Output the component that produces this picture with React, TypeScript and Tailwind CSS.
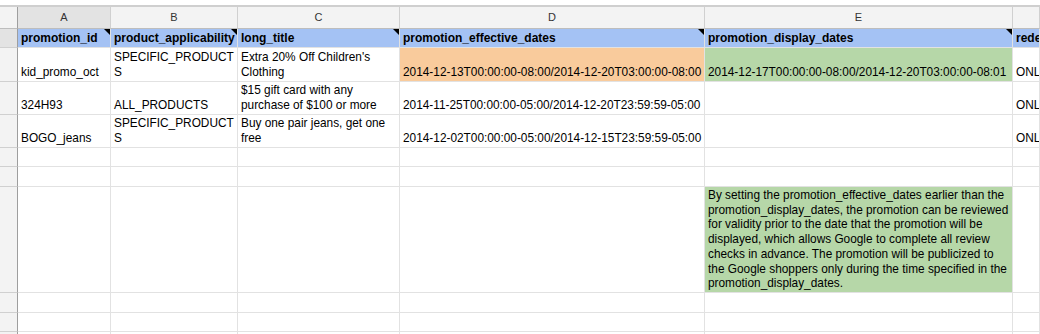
import React from "react";

type CellProps = {
  lines?: string[];
  bg?: string;
  bold?: boolean;
  note?: boolean;
  tight?: boolean;
};

const Cell = ({ lines = [], bg = "bg-white", bold, note, tight }: CellProps) => (
  <div
    className={`relative flex flex-col justify-end overflow-hidden whitespace-nowrap border-b border-r border-[#e2e2e2] px-[3px] pb-[1px] text-black ${
      tight ? "leading-[14.7px]" : "leading-[15px]"
    } ${bg} ${bold ? "text-[12px] font-bold" : "text-[11.85px]"}`}
  >
    {lines.map((l, i) => (
      <span key={i}>{l}</span>
    ))}
    {note && (
      <span className="absolute right-0 top-0 h-0 w-0 border-l-[6px] border-t-[6px] border-l-transparent border-t-black" />
    )}
  </div>
);

const RowHead = ({ dark }: { dark?: boolean }) => (
  <div
    className={`border-b border-r border-b-[#d0d0d0] border-r-[#9e9e9e] ${
      dark ? "bg-[#e3e3e3]" : "bg-[#f3f3f3]"
    }`}
  />
);

const letters = ["A", "B", "C", "D", "E", ""];

const blue = "bg-[#a4c2f4]";
const orange = "bg-[#f9cb9c]";
const green = "bg-[#b6d7a8]";

const rows: CellProps[][] = [
  [
    { lines: ["promotion_id"], bg: blue, bold: true, note: true },
    { lines: ["product_applicability"], bg: blue, bold: true, note: true },
    { lines: ["long_title"], bg: blue, bold: true, note: true },
    { lines: ["promotion_effective_dates"], bg: blue, bold: true, note: true },
    { lines: ["promotion_display_dates"], bg: blue, bold: true, note: true },
    { lines: ["redemption_channel"], bg: blue, bold: true },
  ],
  [
    { lines: ["kid_promo_oct"] },
    { lines: ["SPECIFIC_PRODUCT", "S"] },
    { lines: ["Extra 20% Off Children's", "Clothing"] },
    { lines: ["2014-12-13T00:00:00-08:00/2014-12-20T03:00:00-08:00"], bg: orange },
    { lines: ["2014-12-17T00:00:00-08:00/2014-12-20T03:00:00-08:01"], bg: green },
    { lines: ["ONLINE"] },
  ],
  [
    { lines: ["324H93"] },
    { lines: ["ALL_PRODUCTS"] },
    { lines: ["$15 gift card with any", "purchase of $100 or more"] },
    { lines: ["2014-11-25T00:00:00-05:00/2014-12-20T23:59:59-05:00"] },
    {},
    { lines: ["ONLINE"] },
  ],
  [
    { lines: ["BOGO_jeans"] },
    { lines: ["SPECIFIC_PRODUCT", "S"] },
    { lines: ["Buy one pair jeans, get one", "free"] },
    { lines: ["2014-12-02T00:00:00-05:00/2014-12-15T23:59:59-05:00"] },
    {},
    { lines: ["ONLINE"] },
  ],
  [{}, {}, {}, {}, {}, {}],
  [{}, {}, {}, {}, {}, {}],
  [
    {},
    {},
    {},
    {},
    {
      lines: [
        "By setting the promotion_effective_dates earlier than the",
        "promotion_display_dates, the promotion can be reviewed",
        "for validity prior to the date that the promotion will be",
        "displayed, which allows Google to complete all review",
        "checks in advance. The promotion will be publicized to",
        "the Google shoppers only during the time specified in the",
        "promotion_display_dates.",
      ],
      bg: green,
      tight: true,
    },
    {},
  ],
  [{}, {}, {}, {}, {}, {}],
  [{}, {}, {}, {}, {}, {}],
  [{}, {}, {}, {}, {}, {}],
];

export default function App() {
  return (
    <div className="h-[334px] w-[1040px] overflow-hidden bg-white font-['Liberation_Sans',Arial,sans-serif]">
      <div className="h-[7px] border-b-2 border-[#cfcfcf] bg-white" />
      <div className="grid grid-cols-[18px_93px_127px_162px_305px_308px_1fr] grid-rows-[22px_19px_34px_33px_33px_19px_20px_106px_20px_19px_20px]">
        <div className="border-b border-r border-b-[#bdbdbd] border-r-[#9e9e9e] bg-[#f3f3f3]" />
        {letters.map((l, i) => (
          <div
            key={i}
            className={`flex items-center justify-center border-b border-r border-b-[#bdbdbd] border-r-[#d0d0d0] text-[11px] text-[#333] ${
              i === 0 ? "bg-[#e3e3e3]" : "bg-[#f3f3f3]"
            }`}
          >
            {l}
          </div>
        ))}
        {rows.map((r, ri) => (
          <React.Fragment key={ri}>
            <RowHead dark={ri === 0} />
            {r.map((c, ci) => (
              <Cell key={ci} {...c} />
            ))}
          </React.Fragment>
        ))}
      </div>
    </div>
  );
}
